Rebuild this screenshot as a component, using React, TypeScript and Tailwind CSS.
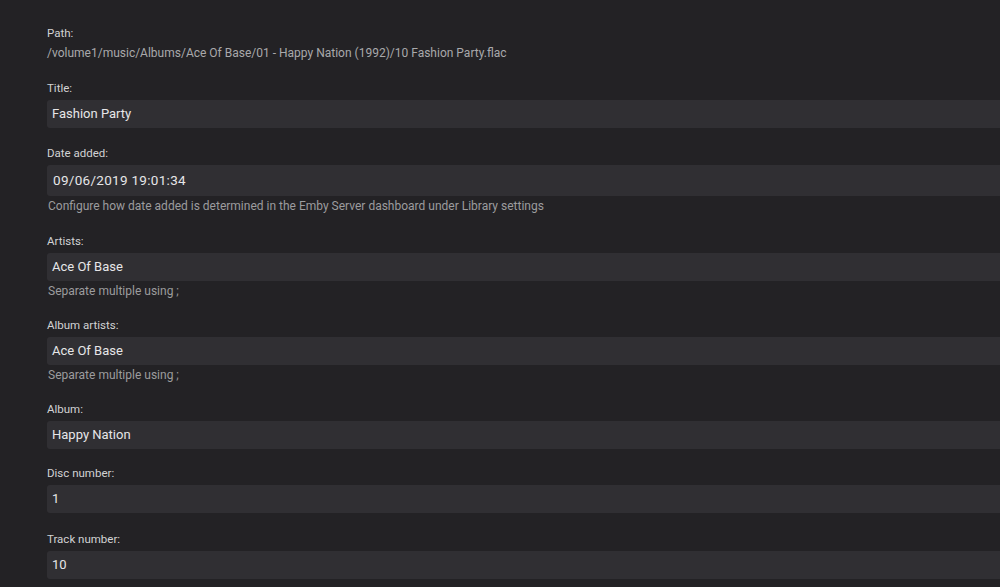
import React from "react";

type Field = { label: string; value: string; hint?: string; date?: boolean; mb: string };

const fields: Field[] = [
  { label: "Title:", value: "Fashion Party", mb: "mb-[18px]" },
  {
    label: "Date added:",
    value: "09/06/2019 19:01:34",
    date: true,
    hint: "Configure how date added is determined in the Emby Server dashboard under Library settings",
    mb: "mb-[21px]",
  },
  { label: "Artists:", value: "Ace Of Base", hint: "Separate multiple using ;", mb: "mb-[20px]" },
  { label: "Album artists:", value: "Ace Of Base", hint: "Separate multiple using ;", mb: "mb-[20px]" },
  { label: "Album:", value: "Happy Nation", mb: "mb-[17px]" },
  { label: "Disc number:", value: "1", mb: "mb-[19px]" },
  { label: "Track number:", value: "10", mb: "mb-[8px]" },
];

export default function App() {
  return (
    <div
      className="w-[1000px] h-[587px] overflow-hidden bg-[#232225] pl-[47px] pt-[26px]"
      style={{ fontFamily: "Roboto, 'Liberation Sans', sans-serif" }}
    >
      <div className="mb-[21px]">
        <div className="text-[11.5px] leading-[14px] text-[#d2d2d4]">Path:</div>
        <div className="mt-[6px] text-[12px] leading-[14px] text-[#a9a9ab]">
          /volume1/music/Albums/Ace Of Base/01 - Happy Nation (1992)/10 Fashion Party.flac
        </div>
      </div>
      {fields.map((f) => (
        <div key={f.label} className={f.mb}>
          <div className="text-[11.5px] leading-[14px] text-[#d2d2d4] mb-[5px]">{f.label}</div>
          <div
            className={
              f.date
                ? "h-[31px] w-[1000px] rounded-[3px] bg-[#302f33] flex items-center pl-[6px] text-[13.5px] tracking-[0.3px] text-[#e6e6e8]"
                : "h-[28px] w-[1000px] rounded-[3px] bg-[#302f33] flex items-center pl-[5px] text-[13px] text-[#e6e6e8]"
            }
          >
            {f.value}
          </div>
          {f.hint && (
            <div className="mt-[3px] text-[12px] leading-[14px] text-[#9c9c9e] pl-[1px]">{f.hint}</div>
          )}
        </div>
      ))}
    </div>
  );
}
